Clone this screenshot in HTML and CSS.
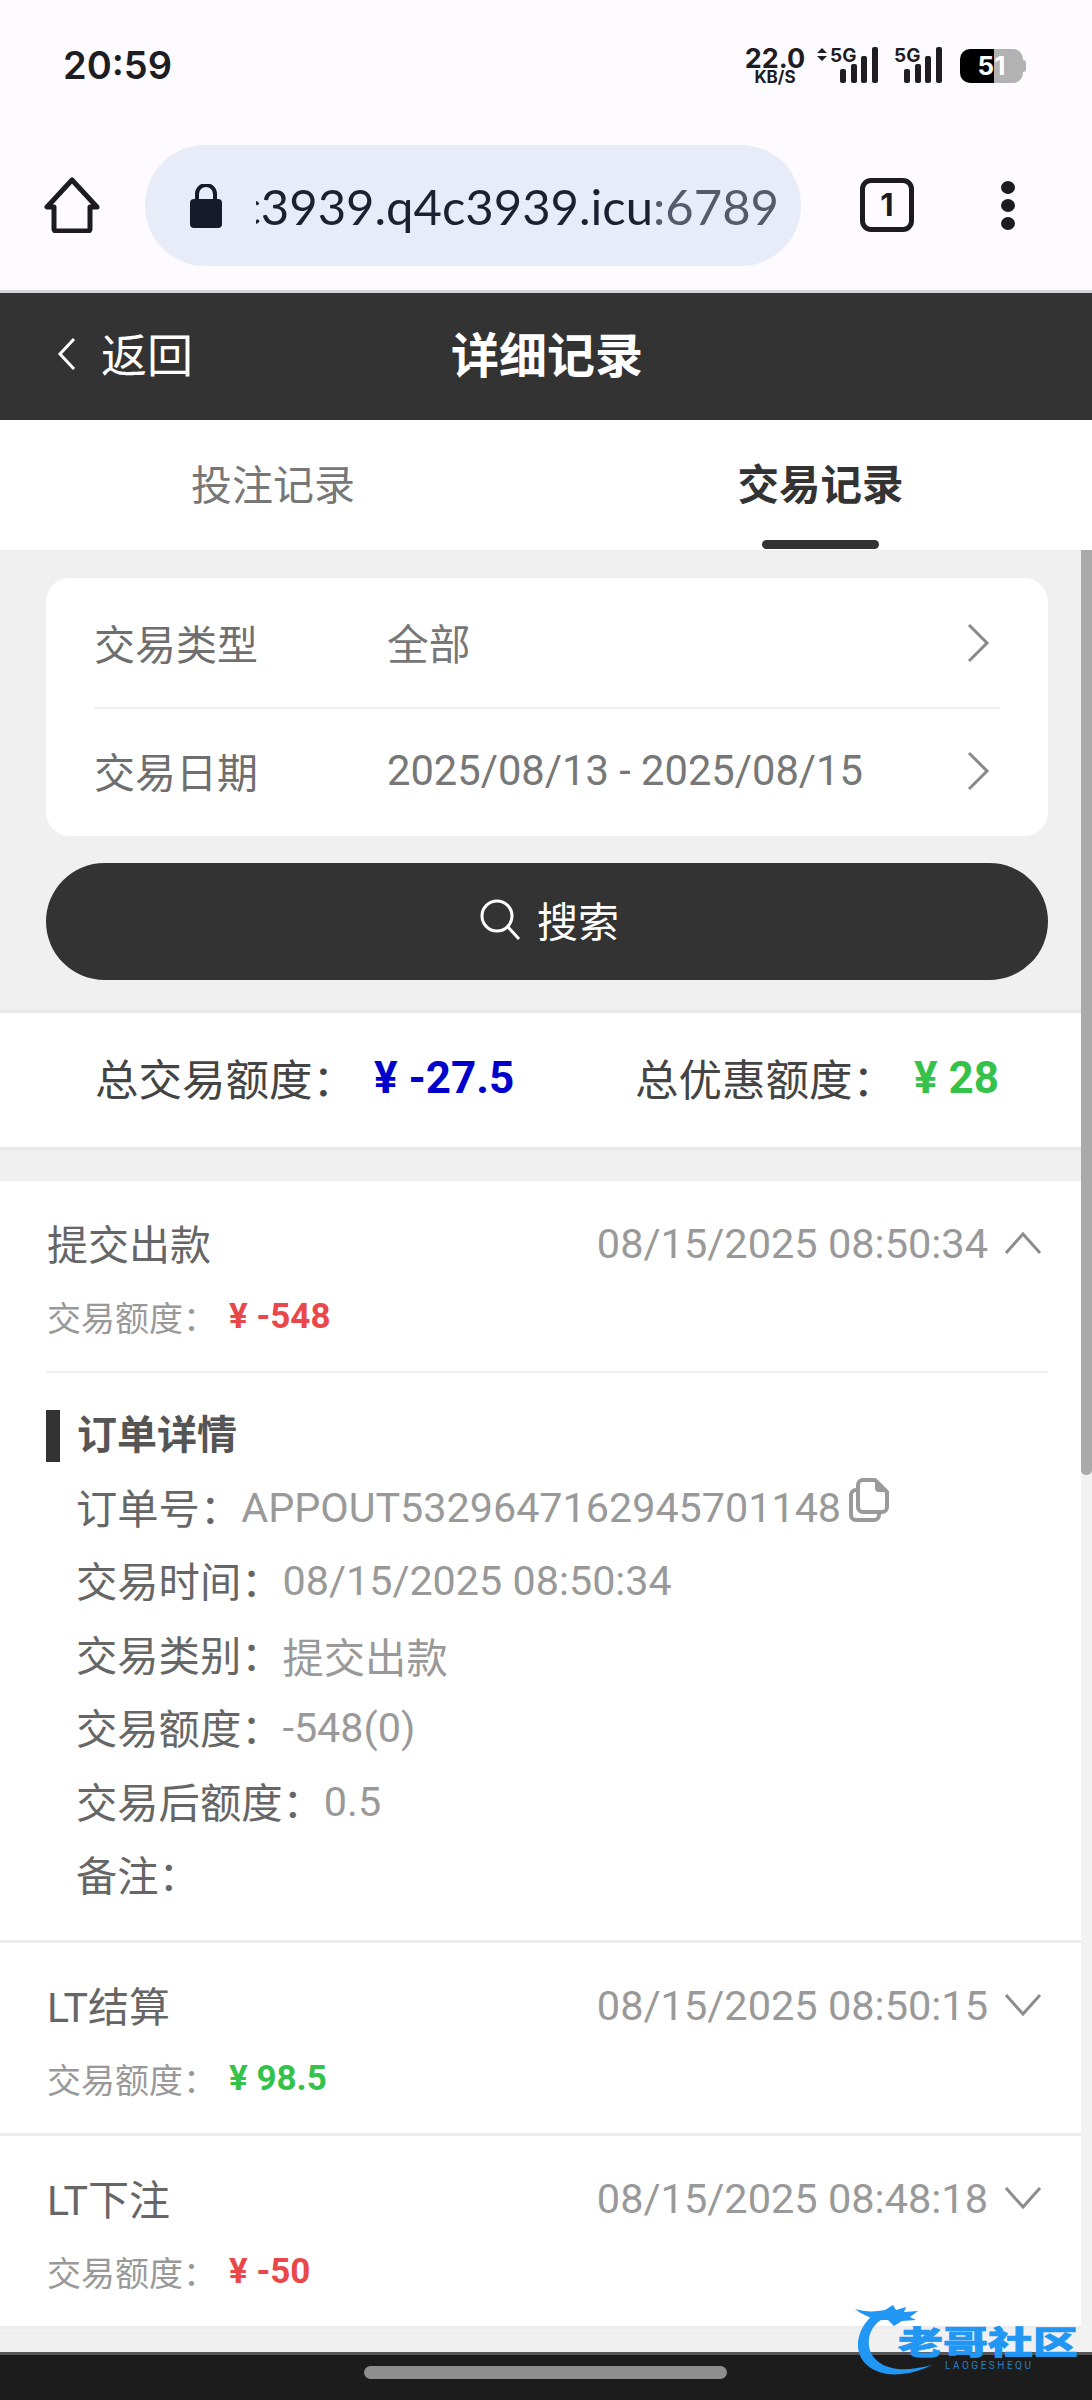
FILE: index.html
```html
<!DOCTYPE html>
<html lang="zh">
  <head>
    <meta charset="UTF-8" />
    <meta name="viewport" content="width=device-width, initial-scale=1.0" />
    <title>详细记录</title>
    <link rel="stylesheet" href="styles.css">
  </head>
  <body>
    <!-- 状态栏 -->
    <div class="status-bar">
      <div class="clock">20:59</div>
      <div class="status-icons">
        <div class="speed"><b>22.0</b><span>KB/S</span></div>
        <svg class="signal" width="70" height="36" viewBox="0 0 70 36">
          <path d="M5 1l5 5H0zM5 14l5-5H0z" fill="#1d1d22" />
          <text x="13" y="15" class="net-text">5G</text>
          <g fill="#1d1d22">
            <rect x="23" y="22" width="6" height="14" rx="2" />
            <rect x="34" y="17" width="6" height="19" rx="2" />
            <rect x="44" y="9" width="6" height="27" rx="2" />
            <rect x="55" y="0" width="6" height="36" rx="2" />
          </g>
        </svg>
        <svg class="signal-b" width="50" height="36" viewBox="0 0 50 36">
          <text x="0" y="15" class="net-text">5G</text>
          <g fill="#1d1d22">
            <rect x="10" y="22" width="6" height="14" rx="2" />
            <rect x="21" y="17" width="6" height="19" rx="2" />
            <rect x="31" y="9" width="6" height="27" rx="2" />
            <rect x="42" y="0" width="6" height="36" rx="2" />
          </g>
        </svg>
        <div class="battery">51</div>
      </div>
    </div>

    <!-- 浏览器地址栏 -->
    <div class="browser-bar">
      <svg class="home-icon" width="56" height="56" viewBox="0 0 56 56">
        <path d="M28 3L3 30h7v22a2 2 0 0 0 2 2h32a2 2 0 0 0 2-2V30h7z" fill="none" stroke="#1b1b20" stroke-width="5" stroke-linejoin="round" />
      </svg>
      <div class="url-pill">
        <svg class="lock-icon" width="34" height="44" viewBox="0 0 34 44">
          <path d="M8 16V10a9 9 0 0 1 18 0v6" fill="none" stroke="#161a2b" stroke-width="4" />
          <rect x="1" y="15" width="32" height="29" rx="4" fill="#161a2b" />
        </svg>
        <div class="url-clip"><div class="url-text">c3939.q4c3939.icu<span>:6789</span></div></div>
      </div>
      <div class="tab-count">1</div>
      <div class="menu-dots"><i></i><i></i><i></i></div>
    </div>

    <!-- 标题 -->
    <div class="page-header">
      <div class="back">
        <svg width="20" height="34" viewBox="0 0 20 34">
          <path d="M17 2L3 17l14 15" fill="none" stroke="#fff" stroke-width="3" />
        </svg>
        <span>返回</span>
      </div>
      <div class="page-title">详细记录</div>
    </div>

    <div class="tabs">
      <div class="tab">投注记录</div>
      <div class="tab active">交易记录<i></i></div>
    </div>

    <div class="content">
      <div class="filter">
        <div class="filter-card">
          <div class="filter-row">
            <span class="filter-label">交易类型</span>
            <span class="filter-value">全部</span>
            <svg class="arrow" width="24" height="40" viewBox="0 0 24 40"><path d="M3 2l18 18L3 38" fill="none" stroke="#8a8a8a" stroke-width="3" /></svg>
          </div>
          <div class="filter-row">
            <span class="filter-label">交易日期</span>
            <span class="filter-value">2025/08/13 - 2025/08/15</span>
            <svg class="arrow" width="24" height="40" viewBox="0 0 24 40"><path d="M3 2l18 18L3 38" fill="none" stroke="#8a8a8a" stroke-width="3" /></svg>
          </div>
        </div>
        <div class="search-btn">
          <svg width="42" height="42" viewBox="0 0 42 42">
            <circle cx="18" cy="18" r="15" fill="none" stroke="#fff" stroke-width="3" />
            <path d="M29 29l11 12" fill="none" stroke="#fff" stroke-width="3" />
          </svg>
          <span>搜索</span>
        </div>
      </div>

      <div class="summary">
        <div class="summary-group">
          <span class="summary-label">总交易额度：</span>
          <b class="blue">¥ -27.5</b>
        </div>
        <div class="summary-group">
          <span class="summary-label">总优惠额度：</span>
          <b class="green">¥ 28</b>
        </div>
      </div>

      <div class="records">
        <div class="record">
          <div class="record-head">
            <div class="record-top">
              <span class="record-name">提交出款</span>
              <span class="record-time">08/15/2025 08:50:34</span>
              <svg class="fold" width="38" height="24" viewBox="0 0 38 24"><path d="M2 22L19 3l17 19" fill="none" stroke="#8c8c8c" stroke-width="3" /></svg>
            </div>
            <div class="record-amount">交易额度：<b class="red">¥ -548</b></div>
          </div>
          <div class="detail">
            <div class="detail-title">订单详情</div>
            <div class="detail-row">订单号：<span>APPOUT5329647162945701148</span>
              <svg class="copy-icon" width="40" height="44" viewBox="0 0 40 44">
                <path d="M9 12H7a5 5 0 0 0-5 5v20a5 5 0 0 0 5 5h18a5 5 0 0 0 5-5v-3" fill="none" stroke="#9a9a9a" stroke-width="4" />
                <path d="M9 7a5 5 0 0 1 5-5h12l12 12v15a5 5 0 0 1-5 5H14a5 5 0 0 1-5-5z" fill="none" stroke="#9a9a9a" stroke-width="4" stroke-linejoin="round" />
                <path d="M26 3v7a4 4 0 0 0 4 4h7z" fill="#9a9a9a" />
              </svg>
            </div>
            <div class="detail-row">交易时间：<span>08/15/2025 08:50:34</span></div>
            <div class="detail-row">交易类别：<span>提交出款</span></div>
            <div class="detail-row">交易额度：<span>-548(0)</span></div>
            <div class="detail-row">交易后额度：<span>0.5</span></div>
            <div class="detail-row">备注：</div>
          </div>
        </div>

        <div class="record">
          <div class="record-head">
            <div class="record-top">
              <span class="record-name">LT结算</span>
              <span class="record-time">08/15/2025 08:50:15</span>
              <svg class="fold" width="38" height="24" viewBox="0 0 38 24"><path d="M2 2l17 19L36 2" fill="none" stroke="#8c8c8c" stroke-width="3" /></svg>
            </div>
            <div class="record-amount">交易额度：<b class="green">¥ 98.5</b></div>
          </div>
        </div>

        <div class="record">
          <div class="record-head">
            <div class="record-top">
              <span class="record-name">LT下注</span>
              <span class="record-time">08/15/2025 08:48:18</span>
              <svg class="fold" width="38" height="24" viewBox="0 0 38 24"><path d="M2 2l17 19L36 2" fill="none" stroke="#8c8c8c" stroke-width="3" /></svg>
            </div>
            <div class="record-amount">交易额度：<b class="red">¥ -50</b></div>
          </div>
        </div>
      </div>

      <div class="scrollbar"><i></i></div>
    </div>

    <div class="nav-bar"><i></i></div>

    <!-- 水印 -->
    <div class="watermark">
      <svg width="110" height="74" viewBox="0 0 110 74">
        <path d="M22 6c-12 10-20 22-19 36 1 18 20 30 44 27 10-1 20-4 30-9-12 3-24 5-34 4C24 62 12 50 14 34 15 24 22 16 34 10z" fill="#2196f3" />
        <path d="M0 4c10 3 20 3 30 1l8-5 3 5 10-3-2 5 14-1-8 6 6 3-14 1-8 5-6-6-12 0C14 12 6 9 0 4z" fill="#2196f3" />
      </svg>
      <div class="mark-text">老哥社区</div>
      <div class="mark-sub">LAOGESHEQU</div>
    </div>
  </body>
</html>
```

FILE: styles.css
```css
* {
  box-sizing: border-box;
}
html,
body {
  margin: 0;
  height: 2400px;
  overflow: hidden;
}
body {
  position: relative;
  display: flex;
  flex-direction: column;
  width: 1092px;
  font-family: Roboto, "Noto Sans CJK SC", sans-serif;
  background-color: #fdfbff;
}

/* 状态栏 */
.status-bar {
  flex: none;
  height: 125px;
  display: flex;
  justify-content: space-between;
  align-items: flex-start;
  padding: 47px 66px 0 63px;
}
.clock {
  font-family: Inter, sans-serif;
  font-weight: 600;
  font-size: 38px;
  line-height: 38px;
  margin-top: -1px;
  color: #1d1d22;
}
.status-icons {
  display: flex;
  align-items: flex-start;
  color: #1d1d22;
  font-family: Inter, sans-serif;
}
.speed {
  width: 60px;
  margin-right: 12px;
  display: flex;
  flex-direction: column;
  align-items: center;
}
.speed b {
  font-size: 27px;
  line-height: 23px;
  font-weight: 700;
  white-space: nowrap;
}
.speed span {
  font-size: 17px;
  line-height: 14px;
  font-weight: 700;
}
.net-text {
  font-family: Inter, sans-serif;
  font-size: 19px;
  font-weight: 700;
  fill: #1d1d22;
}
.signal,
.signal-b {
  overflow: visible;
}
.signal {
  margin-right: 7px;
}
.signal-b {
  margin-right: 16px;
}
.battery {
  position: relative;
  width: 63px;
  height: 34px;
  margin-top: 2px;
  margin-right: 3px;
  border-radius: 10px;
  background: linear-gradient(90deg, #000 34px, #b2b2b2 34px);
  text-align: center;
  font-weight: 700;
  font-size: 26px;
  line-height: 34px;
  color: #fff;
}
.battery::after {
  content: "";
  position: absolute;
  right: -3px;
  top: 11px;
  width: 3px;
  height: 12px;
  border-radius: 0 3px 3px 0;
  background-color: #b2b2b2;
}

/* 地址栏 */
.browser-bar {
  flex: none;
  height: 168px;
  display: flex;
  align-items: flex-start;
  padding-top: 20px;
  border-bottom: 3px solid #d6d6da;
}
.home-icon {
  margin: 32px 0 0 44px;
}
.url-pill {
  width: 656px;
  height: 121px;
  margin-left: 45px;
  padding-left: 44px;
  border-radius: 60px;
  background-color: #e8ecf9;
  display: flex;
  align-items: center;
}
.lock-icon {
  flex: none;
}
.url-clip {
  width: 523px;
  margin-left: 33px;
  overflow: hidden;
  display: flex;
  justify-content: flex-end;
}
.url-text {
  font-family: Lato, sans-serif;
  font-size: 49px;
  line-height: 64px;
  color: #1d2030;
  white-space: nowrap;
}
.url-text span {
  color: #565b6b;
}
.tab-count {
  width: 54px;
  height: 54px;
  margin: 33px 0 0 59px;
  border: 5px solid #1b1b20;
  border-radius: 11px;
  text-align: center;
  font-family: Inter, sans-serif;
  font-weight: 700;
  font-size: 31px;
  line-height: 44px;
  color: #1b1b20;
}
.menu-dots {
  width: 14px;
  margin: 36px 0 0 87px;
  display: flex;
  flex-direction: column;
  gap: 5px;
}
.menu-dots i {
  height: 13px;
  border-radius: 50%;
  background-color: #1b1b20;
}

/* 标题 */
.page-header {
  flex: none;
  height: 127px;
  display: grid;
  grid-template-columns: 1fr auto 1fr;
  align-items: center;
  padding: 0 0 9px 57px;
  background-color: #333;
  color: #fff;
}
.back {
  grid-column: 1;
  display: flex;
  align-items: center;
  gap: 24px;
  font-size: 46px;
}
.back svg {
  margin-bottom: -3px;
}
.page-title {
  grid-column: 2;
  margin-left: -55px;
  font-size: 48px;
  font-weight: 700;
}
.tabs {
  flex: none;
  height: 130px;
  display: grid;
  grid-template-columns: 1fr 1fr;
  background-color: #fff;
}
.tab {
  display: flex;
  flex-direction: column;
  align-items: center;
  padding-top: 36px;
  font-size: 41px;
  line-height: 60px;
  color: #777;
}
.tab.active {
  padding-left: 3px;
  font-size: 41.5px;
  font-weight: 700;
  color: #333;
}
.tab i {
  width: 117px;
  height: 9px;
  margin-top: auto;
  margin-bottom: 1px;
  border-radius: 5px;
  background-color: #333;
}

/* 内容 */
.content {
  position: relative;
  flex: 1;
  min-height: 0;
  overflow: hidden;
  background-color: #f0f0f0;
}
.filter {
  padding: 28px 44px 30px 46px;
}
.filter-card {
  height: 258px;
  padding: 0 48px;
  border-radius: 24px;
  background-color: #fff;
}
.filter-row {
  height: 129px;
  display: flex;
  align-items: center;
  font-size: 41px;
  color: #777;
}
.filter-row + .filter-row {
  padding-bottom: 4px;
  border-top: 2px solid #eee;
}
.filter-label {
  width: 293px;
  margin-top: -2px;
  color: #6f6f6f;
}
.filter-value {
  flex: 1;
  font-size: 41.7px;
}
.filter-row:first-child .filter-value {
  margin-top: -2px;
}
.arrow {
  margin-right: 10px;
}
.search-btn {
  height: 117px;
  margin-top: 27px;
  padding: 0 0 6px 4px;
  border-radius: 59px;
  background-color: #333;
  color: #fff;
  display: flex;
  align-items: center;
  justify-content: center;
  gap: 16px;
  font-size: 41px;
}
.summary {
  height: 140px;
  display: flex;
  justify-content: space-between;
  align-items: center;
  padding: 0 93px 4px 95px;
  border-top: 3px solid #e8e8e8;
  border-bottom: 3px solid #e8e8e8;
  background-color: #fff;
}
.summary-group {
  display: flex;
  align-items: center;
  gap: 18px;
}
.summary-label {
  margin-top: -2px;
  font-size: 43.5px;
  color: #444;
}
.summary b {
  font-size: 44px;
}
.blue {
  color: #0000cd;
}
.green {
  color: #35c24a;
}
.red {
  color: #e9474a;
}

/* 记录列表 */
.records {
  margin-top: 31px;
  background-color: #fff;
}
.record {
  border-bottom: 3px solid #ececec;
}
.record-head {
  height: 190px;
  padding: 34px 6px 0 1px;
  margin: 0 44px 0 46px;
}
.record-top {
  height: 56px;
  display: flex;
  align-items: center;
}
.record-name {
  flex: 1;
  margin-top: -3px;
  font-size: 41px;
  color: #666;
}
.record-time {
  font-size: 41.5px;
  color: #999;
}
.fold {
  margin-left: 16px;
  flex: none;
}
.record-amount {
  height: 50px;
  margin-top: 20px;
  display: flex;
  align-items: center;
  font-size: 34px;
  color: #999;
}
.record-amount b {
  margin-left: 12px;
  font-size: 35px;
}
.detail {
  margin: 0 44px 0 46px;
  padding: 37px 0 28px;
  border-top: 2px solid #eee;
}
.detail-title {
  height: 52px;
  margin-bottom: 9px;
  padding-left: 17px;
  border-left: 14px solid #333;
  font-size: 40px;
  font-weight: 700;
  line-height: 52px;
  color: #555;
}
.detail-row {
  height: 73.5px;
  padding: 0 0 4px 30px;
  display: flex;
  align-items: center;
  font-size: 41.3px;
  color: #666;
}
.detail-row span {
  margin-top: 4px;
  color: #999;
}
.copy-icon {
  margin: -12px 0 0 8px;
}

/* 滚动条 */
.scrollbar {
  position: absolute;
  top: 0;
  right: 0;
  bottom: 0;
  width: 11px;
  background-color: #f2f2f2;
}
.scrollbar i {
  display: block;
  height: 925px;
  border-radius: 0 0 5px 5px;
  background-color: #aaa;
}
.nav-bar {
  flex: none;
  height: 48px;
  padding-top: 11px;
  border-top: 3px solid #555;
  background-color: #1c1c1c;
}
.nav-bar i {
  display: block;
  width: 363px;
  height: 13px;
  margin-left: 364px;
  border-radius: 7px;
  background-color: #8e8e8e;
}

/* 水印 */
.watermark {
  position: absolute;
  left: 855px;
  top: 2305px;
  width: 225px;
  height: 74px;
}
.watermark svg {
  position: absolute;
  left: 0;
  top: 0;
}
.mark-text {
  position: absolute;
  left: 43px;
  top: 18px;
  font-size: 45px;
  line-height: 40px;
  font-weight: 900;
  color: #2196f3;
  white-space: nowrap;
  transform: scaleY(0.72);
  -webkit-text-stroke: 1px #2196f3;
}
.mark-sub {
  position: absolute;
  left: 90px;
  top: 55px;
  font-size: 10px;
  line-height: 12px;
  letter-spacing: 2.5px;
  color: #2a7fc4;
}
```
